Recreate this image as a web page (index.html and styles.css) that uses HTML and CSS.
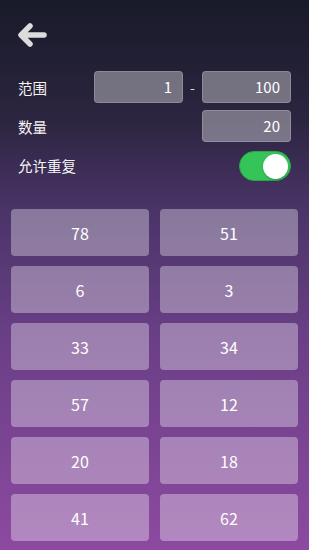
FILE: index.html
```html
<!DOCTYPE html>
<html lang="zh">
<head>
<meta charset="utf-8">
<link rel="stylesheet" href="styles.css">
</head>
<body>
<div class="app">
  <header class="top">
    <svg class="back" width="30" height="26" viewBox="0 0 30 26">
      <path d="M27 13 H6 M13 4 L4 13 L13 22" fill="none" stroke="#dcdcdc" stroke-width="5.5" stroke-linecap="round" stroke-linejoin="round"/>
    </svg>
  </header>
  <section class="form">
    <div class="row">
      <span class="label">范围</span>
      <div class="fields">
        <div class="input">1</div>
        <span class="dash">-</span>
        <div class="input">100</div>
      </div>
    </div>
    <div class="row">
      <span class="label">数量</span>
      <div class="input">20</div>
    </div>
    <div class="row">
      <span class="label">允许重复</span>
      <div class="toggle"><div class="knob"></div></div>
    </div>
  </section>
  <section class="grid">
    <div class="card">78</div><div class="card">51</div>
    <div class="card">6</div><div class="card">3</div>
    <div class="card">33</div><div class="card">34</div>
    <div class="card">57</div><div class="card">12</div>
    <div class="card">20</div><div class="card">18</div>
    <div class="card">41</div><div class="card">62</div>
  </section>
</div>
</body>
</html>
```

FILE: styles.css
```css
html, body {
  margin: 0;
  padding: 0;
}
body {
  width: 309px;
  height: 550px;
  overflow: hidden;
  background: linear-gradient(180deg, #181a29 0%, #2c2540 22%, #4a3468 38%, #6b3f87 62%, #8c4aa0 100%);
  font-family: "Noto Sans CJK SC", "Noto Sans", sans-serif;
  color: #fff;
}
.app {
  display: flex;
  flex-direction: column;
}
.top {
  height: 71px;
  padding: 22px 0 0 17px;
  box-sizing: border-box;
}
.back {
  display: block;
}
.form {
  display: flex;
  flex-direction: column;
  gap: 7px;
  padding: 0 18px 0 18px;
}
.row {
  display: flex;
  align-items: center;
  justify-content: space-between;
  height: 32px;
}
.label {
  font-size: 14.5px;
  color: #f4f4f4;
}
.fields {
  display: flex;
  align-items: center;
}
.dash {
  width: 19px;
  text-align: center;
  font-size: 14px;
  color: #ddd;
}
.input {
  width: 89px;
  height: 32px;
  box-sizing: border-box;
  border-radius: 4px;
  background: rgba(255, 255, 255, 0.36);
  border: 1px solid rgba(255, 255, 255, 0.18);
  font-size: 15px;
  line-height: 30px;
  text-align: right;
  padding-right: 10px;
  color: #fff;
}
.toggle {
  width: 52px;
  height: 30px;
  box-sizing: border-box;
  border-radius: 15px;
  background: #35c457;
  border: 1px solid #2aa548;
  display: flex;
  align-items: center;
  justify-content: flex-end;
  padding-right: 2px;
  margin-top: 2px;
}
.knob {
  width: 25px;
  height: 25px;
  border-radius: 50%;
  background: #fff;
  box-shadow: 0 1px 2px rgba(0,0,0,0.2);
}
.grid {
  display: grid;
  grid-template-columns: 138px 138px;
  column-gap: 11px;
  row-gap: 10px;
  padding: 28px 11px 0 11px;
}
.card {
  height: 47px;
  border-radius: 4px;
  background: rgba(255, 255, 255, 0.34);
  display: flex;
  align-items: center;
  justify-content: center;
  font-size: 16px;
  color: #fff;
}
```
